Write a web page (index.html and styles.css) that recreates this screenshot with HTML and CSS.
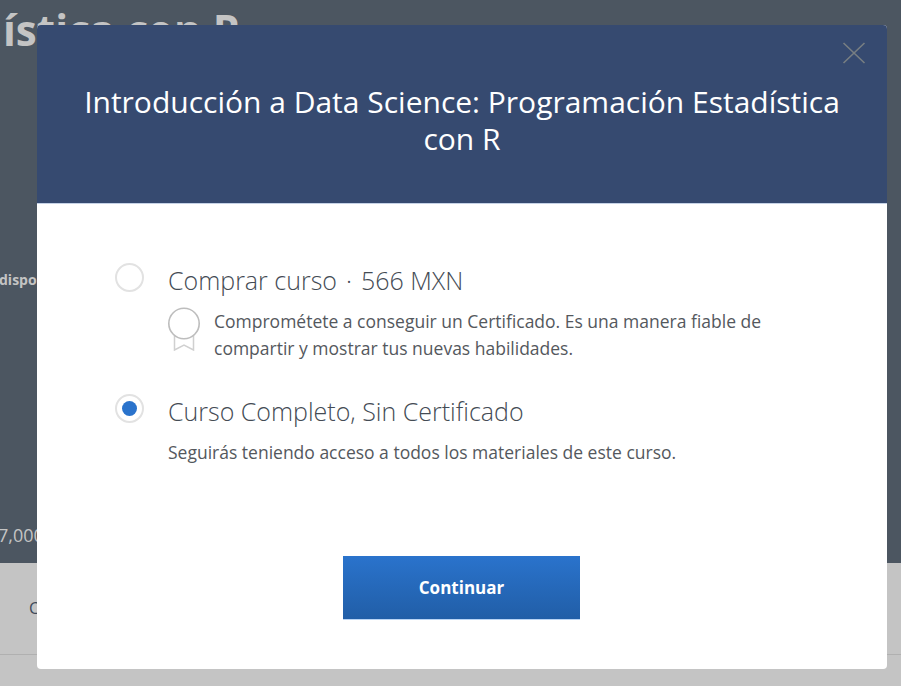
FILE: index.html
```html
<!DOCTYPE html>
<html lang="es">
<head>
    <meta charset="UTF-8">
    <meta name="viewport" content="width=device-width, initial-scale=1.0">
    <title>Introducción a Data Science</title>
    <link rel="stylesheet" href="styles.css">
</head>
<body>
    <div class="page">
        <div class="hero">
            <div class="hero-title">ística con R</div>
            <div class="hero-note">disponible</div>
            <div class="hero-count">7,000</div>
        </div>
        <div class="tabs">
            <div class="tab">Cursos</div>
        </div>
    </div>

    <div class="modal">
        <div class="modal-header">
            <h1>Introducción a Data Science: Programación Estadística con R</h1>
            <svg class="close-icon" width="24" height="24" viewBox="0 0 24 24">
                <path d="M1.5 2 L22.5 22 M22.5 2 L1.5 22" stroke="#777e82" stroke-width="1.6" fill="none"/>
            </svg>
        </div>
        <div class="modal-body">
            <div class="option option-first">
                <span class="radio"></span>
                <div class="option-text">
                    <h2>Comprar curso<span class="dot">·</span>566 MXN</h2>
                    <div class="cert">
                        <svg class="cert-icon" width="34" height="44" viewBox="0 0 34 44">
                            <path d="M6.5 28 V43 L16 38 L25.5 43 V28" stroke="#d0d0d0" stroke-width="1.5" fill="#fff"/>
                            <circle cx="16" cy="16.5" r="15.2" stroke="#bdbdbd" stroke-width="1.6" fill="#fff"/>
                        </svg>
                        <p>Comprométete a conseguir un Certificado. Es una manera fiable de compartir y mostrar tus nuevas habilidades.</p>
                    </div>
                </div>
            </div>
            <div class="option">
                <span class="radio radio-on"></span>
                <div class="option-text">
                    <h2>Curso Completo, Sin Certificado</h2>
                    <p class="plain">Seguirás teniendo acceso a todos los materiales de este curso.</p>
                </div>
            </div>
            <div class="actions">
                <button class="continue">Continuar</button>
            </div>
        </div>
    </div>
</body>
</html>
```

FILE: styles.css
```css
html, body {
    margin: 0;
    padding: 0;
    height: 100%;
    overflow: hidden;
}

body {
    font-family: "Open Sans", sans-serif;
    background-color: #c4c4c4;
}

.page {
    height: 686px;
    display: flex;
    flex-direction: column;
}

.hero {
    height: 563px;
    background-color: #4c5661;
    overflow: hidden;
    display: flex;
    flex-direction: column;
    align-items: flex-start;
}

.hero-title {
    margin: 0 0 0 3px;
    height: 60px;
    line-height: 60px;
    font-size: 42.2px;
    font-weight: 700;
    color: #c4c4c4;
    white-space: nowrap;
}

.hero-note {
    margin: 210px 0 0 -1px;
    font-size: 14px;
    line-height: 20px;
    font-weight: 700;
    color: #c4c4c4;
}

.hero-count {
    margin-top: 232px;
    margin-left: -2px;
    font-size: 18px;
    line-height: 26px;
    color: #c4c4c4;
}

.tabs {
    height: 92px;
    border-bottom: 1px solid #b0b0b0;
    box-sizing: border-box;
    padding-left: 29px;
    padding-top: 34px;
}

.tab {
    font-size: 16px;
    line-height: 22px;
    color: #3f4a5a;
}

.modal {
    position: absolute;
    left: 37px;
    top: 25px;
    width: 850px;
    height: 644px;
    background-color: #fff;
    border-radius: 4px;
    overflow: hidden;
}

.modal-header {
    position: relative;
    height: 179px;
    box-sizing: border-box;
    background-color: #364a70;
    border-bottom: 1px solid #c5d2e6;
    padding: 58px 40px 0;
}

.modal-header h1 {
    margin: 0;
    font-size: 30px;
    line-height: 37px;
    font-weight: 400;
    color: #fff;
    text-align: center;
}

.close-icon {
    position: absolute;
    top: 16px;
    right: 21px;
}

.modal-body {
    padding: 59px 78px 0;
}

.option {
    display: flex;
    align-items: flex-start;
}

.option-first {
    margin-bottom: 32px;
}

.radio {
    width: 29px;
    height: 29px;
    flex: none;
    box-sizing: border-box;
    border: 2px solid #e2e2e2;
    border-radius: 50%;
    background-color: #fff;
    margin-right: 24px;
    display: flex;
    align-items: center;
    justify-content: center;
}

.radio-on::after {
    content: "";
    width: 15px;
    height: 15px;
    border-radius: 50%;
    background-color: #2a73cc;
}

.option-text {
    padding-top: 1px;
}

.option-text h2 {
    margin: 0;
    font-size: 25px;
    line-height: 32px;
    font-weight: 300;
    color: #444b54;
    white-space: nowrap;
}

.dot {
    margin: 0 9px;
}

.cert {
    display: flex;
    align-items: flex-start;
    margin-top: 12px;
}

.cert-icon {
    flex: none;
    margin-top: -1px;
    margin-right: 12px;
}

.cert p, .plain {
    margin: 0;
    font-size: 17.5px;
    line-height: 27px;
    color: #54585d;
}

.cert p {
    width: 570px;
}

.plain {
    margin-top: 12px;
}

.actions {
    display: flex;
    justify-content: center;
    padding-right: 1px;
    margin-top: 90px;
}

.continue {
    width: 237px;
    height: 64px;
    border: none;
    border-bottom: 1px solid #b9d4f5;
    background: linear-gradient(#2a73cc, #215ea7);
    color: #fff;
    font-family: "Open Sans", sans-serif;
    font-size: 17px;
    font-weight: 700;
    cursor: pointer;
}
```
